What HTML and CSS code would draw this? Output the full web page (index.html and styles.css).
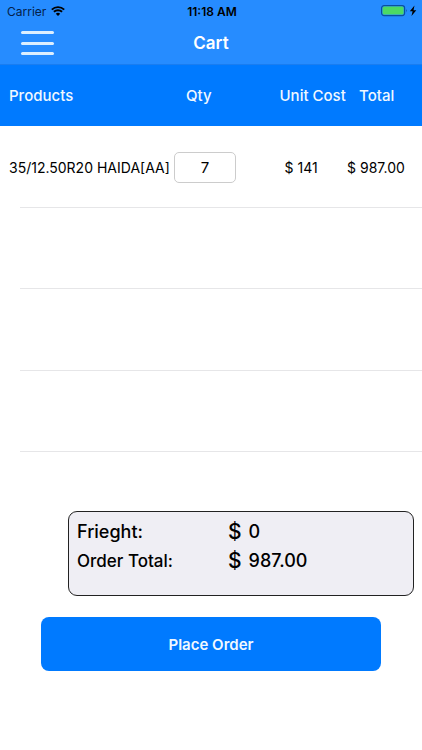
FILE: index.html
```html
<!DOCTYPE html>
<html lang="en">
<head>
<meta charset="utf-8">
<meta name="viewport" content="width=device-width, initial-scale=1">
<title>Cart</title>
<link rel="stylesheet" href="styles.css">
</head>
<body>
<header class="top">
  <div class="status">
    <div class="carrier">Carrier
      <svg class="wifi" viewBox="0 0 14 10" aria-hidden="true">
        <path d="M.8 3.6a9 9 0 0 1 12.4 0M2.9 5.8a6 6 0 0 1 8.2 0" fill="none" stroke="currentColor" stroke-width="1.9"/>
        <path d="M7 10 4.8 7.8a3.200 3.200 0 0 1 4.400 0z" fill="currentColor"/>
      </svg>
    </div>
    <div class="clock">11:18 AM</div>
    <div class="power">
      <svg class="battery" viewBox="0 0 36 12" aria-hidden="true">
        <rect x=".6" y=".6" width="23" height="10" rx="2.500" fill="none" stroke="#0b4fa0" stroke-width="1.200"/>
        <rect x="1.600" y="1.600" width="21" height="8" rx="1.500" fill="#4cd964"/>
        <path d="M25.200 4q1.500 1.600 0 3.200z" fill="#0b4fa0"/>
        <path d="M33.500.6 28.800 6.300h2.800L30.500 11 35.300 5.200h-2.800z" fill="#000"/>
      </svg>
    </div>
  </div>
  <nav class="bar">
    <button class="menu" type="button" aria-label="Menu"><span></span><span></span><span></span></button>
    <h1>Cart</h1>
  </nav>
</header>
<main>
  <table class="cart">
    <colgroup><col class="c-product"><col class="c-qty"><col class="c-cost"><col class="c-total"></colgroup>
    <thead>
      <tr><th class="product">Products</th><th class="inset">Qty</th><th>Unit Cost</th><th class="inset">Total</th></tr>
    </thead>
    <tbody>
      <tr>
        <td class="product">35/12.50R20 HAIDA[AA]</td>
        <td><input class="qty" type="text" inputmode="numeric" value="7" aria-label="Quantity"></td>
        <td class="cost">$ 141</td>
        <td><span class="money"><span>$</span><span>987.00</span></span></td>
      </tr>
      <tr><td colspan="4"></td></tr>
      <tr><td colspan="4"></td></tr>
      <tr><td colspan="4"></td></tr>
    </tbody>
  </table>
  <dl class="summary">
    <dt>Frieght:</dt><dd><span class="sign">$</span><span>0</span></dd>
    <dt class="order-total">Order Total:</dt><dd><span class="sign">$</span><span>987.00</span></dd>
  </dl>
  <button class="place" type="button">Place Order</button>
</main>
</body>
</html>
```
FILE: styles.css
```css
* { box-sizing: border-box; }
body {
  margin: 0;
  background: #fff;
  color: #000;
  font-family: Inter, "Liberation Sans", sans-serif;
  font-size: 14px;
}
.top { background: #268cff; border-bottom: 1px solid #1a7df0; }
.status {
  display: grid;
  grid-template-columns: 1fr auto 1fr;
  align-items: center;
  height: 22px;
  padding: 0 5px 0 7px;
  font-size: 12px;
}
.carrier { display: flex; align-items: center; gap: 5px; color: #04214a; }
.wifi { width: 14px; height: 10px; color: #000; }
.clock { font-weight: 600; }
.power { display: flex; justify-content: flex-end; }
.battery { width: 36px; height: 12px; }
.bar {
  display: grid;
  grid-template-columns: 1fr auto 1fr;
  align-items: center;
  height: 42px;
  padding: 0 20px;
}
.menu {
  display: flex;
  flex-direction: column;
  justify-content: space-between;
  width: 34px;
  height: 24px;
  padding: 0 0 0 1px;
  border: 0;
  background: none;
}
.menu span { height: 3px; border-radius: 2px; background: #dcefff; }
h1 { margin: 0; color: #fff; font-size: 17px; font-weight: 600; }
.cart { width: 100%; border-collapse: collapse; table-layout: fixed; }
.c-product { width: 41%; }
.c-qty { width: 25%; }
.c-cost { width: 16%; }
.c-total { width: 18%; }
th, td { padding: 0; white-space: nowrap; text-align: left; font-weight: 400; }
thead tr { height: 61px; background: #007aff; color: #f0f8ff; }
th { font-size: 15px; font-weight: 500; }
tbody tr {
  height: 81px;
  background: linear-gradient(#e6e6e8, #e6e6e8) 20px 100% / 100% 1px no-repeat;
}
tbody tr:nth-child(odd) { height: 82px; }
td { padding-left: 1px; }
th { padding-left: 1px; }
.product { padding-left: 9px; }
.inset { padding-left: 13px; }
.cost { padding-left: 6px; }
.qty {
  display: block;
  width: 62px;
  height: 31px;
  padding: 0;
  border: 1px solid #ccc;
  border-radius: 5px;
  background: #fff;
  color: #000;
  font: inherit;
  font-size: 15px;
  text-align: center;
}
.money { display: flex; gap: 4px; }
.summary {
  display: grid;
  grid-template-columns: 151px 1fr;
  align-content: start;
  row-gap: 3px;
  min-height: 85px;
  margin: 59px 8px 0 68px;
  padding: 7px 8px;
  border: 1px solid #222;
  border-radius: 9px;
  background: #efeef4;
  font-size: 18px;
  line-height: 26px;
  font-weight: 500;
}
.summary dd { display: flex; gap: 7px; margin: 0; }
.sign { font-size: 21px; }
.order-total { font-size: 17px; }
.place {
  display: block;
  width: calc(100% - 82px);
  height: 54px;
  margin: 21px 41px 0;
  padding: 0;
  border: 0;
  border-radius: 8px;
  background: #007aff;
  color: #f0f8ff;
  font: inherit;
  font-size: 15px;
  font-weight: 600;
}
```
